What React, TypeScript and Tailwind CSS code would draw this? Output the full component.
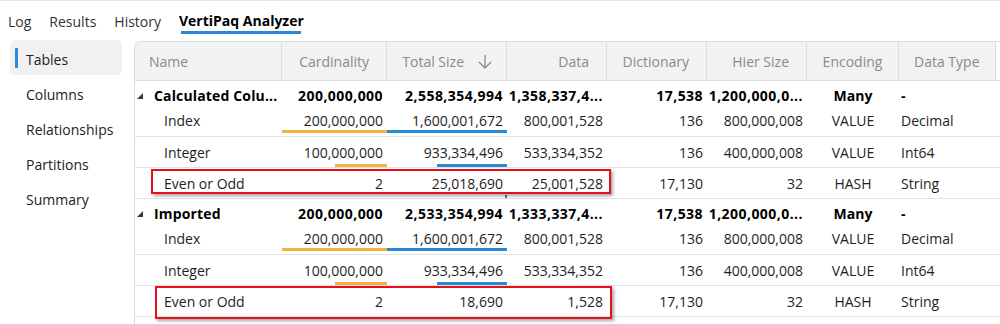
import React from "react";

type Row = {
  name: string;
  card: string;
  total: string;
  data: string;
  dict: string;
  hier: string;
  enc: string;
  type: string;
  cardBar?: number;
  totalBar?: number;
};

type Group = Row & { children: Row[] };

const groups: Group[] = [
  {
    name: "Calculated Colu...",
    card: "200,000,000",
    total: "2,558,354,994",
    data: "1,358,337,4...",
    dict: "17,538",
    hier: "1,200,000,0...",
    enc: "Many",
    type: "-",
    children: [
      { name: "Index", card: "200,000,000", total: "1,600,001,672", data: "800,001,528", dict: "136", hier: "800,000,008", enc: "VALUE", type: "Decimal", cardBar: 105, totalBar: 120 },
      { name: "Integer", card: "100,000,000", total: "933,334,496", data: "533,334,352", dict: "136", hier: "400,000,008", enc: "VALUE", type: "Int64", cardBar: 52, totalBar: 70 },
      { name: "Even or Odd", card: "2", total: "25,018,690", data: "25,001,528", dict: "17,130", hier: "32", enc: "HASH", type: "String", cardBar: 0, totalBar: 2 },
    ],
  },
  {
    name: "Imported",
    card: "200,000,000",
    total: "2,533,354,994",
    data: "1,333,337,4...",
    dict: "17,538",
    hier: "1,200,000,0...",
    enc: "Many",
    type: "-",
    children: [
      { name: "Index", card: "200,000,000", total: "1,600,001,672", data: "800,001,528", dict: "136", hier: "800,000,008", enc: "VALUE", type: "Decimal", cardBar: 105, totalBar: 120 },
      { name: "Integer", card: "100,000,000", total: "933,334,496", data: "533,334,352", dict: "136", hier: "400,000,008", enc: "VALUE", type: "Int64", cardBar: 52, totalBar: 70 },
      { name: "Even or Odd", card: "2", total: "18,690", data: "1,528", dict: "17,130", hier: "32", enc: "HASH", type: "String", cardBar: 0, totalBar: 0 },
    ],
  },
];

const cols = "grid grid-cols-[147px_105px_120px_100px_100px_100px_92px_97px_1fr]";

function Bar({ w, color }: { w?: number; color: string }) {
  if (!w) return null;
  return (
    <div
      className={`absolute right-0 bottom-0 h-[3px] ${color}`}
      style={{ width: w }}
    />
  );
}

function GroupRow({ g }: { g: Group }) {
  return (
    <div className={`${cols} h-[26px] pt-[3px] items-center font-bold text-black`}>
      <div className="flex items-center pl-[2px] whitespace-nowrap overflow-hidden tracking-[0.15px]">
        <svg width="6" height="6" viewBox="0 0 6 6" className="mr-[11px]">
          <polygon points="6,0 6,6 0,6" fill="#3a3a3a" />
        </svg>
        <span>{g.name}</span>
      </div>
      <div className="text-right pr-[4px] whitespace-nowrap tracking-[0.45px]">{g.card}</div>
      <div className="text-right pr-[4px] whitespace-nowrap tracking-[0.45px]">{g.total}</div>
      <div className="text-right pr-[4px] whitespace-nowrap tracking-[0.45px]">{g.data}</div>
      <div className="text-right pr-[4px] whitespace-nowrap tracking-[0.45px]">{g.dict}</div>
      <div className="text-right pr-[4px] whitespace-nowrap tracking-[0.45px]">{g.hier}</div>
      <div className="text-center whitespace-nowrap">{g.enc}</div>
      <div className="pl-[2px] whitespace-nowrap">{g.type}</div>
      <div />
    </div>
  );
}

function ChildRow({ r, first }: { r: Row; first: boolean }) {
  const h = first ? "h-[30px] pb-[3px]" : "h-[31px]";
  return (
    <div className={`${cols} ${h} items-center border-b border-[#e2e2e2] text-[#1e1e1e]`}>
      <div className="pl-[29px] whitespace-nowrap">{r.name}</div>
      <div className="relative h-full flex items-center justify-end pr-[4px] whitespace-nowrap">
        {r.card}
        <Bar w={r.cardBar} color="bg-[#f7b03e]" />
      </div>
      <div className="relative h-full flex items-center justify-end pr-[4px] whitespace-nowrap">
        {r.total}
        <Bar w={r.totalBar} color="bg-[#2a88d8]" />
      </div>
      <div className="text-right pr-[4px] whitespace-nowrap">{r.data}</div>
      <div className="text-right pr-[4px] whitespace-nowrap">{r.dict}</div>
      <div className="text-right pr-[4px] whitespace-nowrap">{r.hier}</div>
      <div className="text-center whitespace-nowrap">{r.enc}</div>
      <div className="pl-[2px] whitespace-nowrap">{r.type}</div>
      <div />
    </div>
  );
}

export default function App() {
  const headerCell = "h-full flex items-center pt-[1px] border-r border-[#dcdcdc] whitespace-nowrap";
  return (
    <div className="w-[1000px] h-[324px] overflow-hidden bg-white border-t border-[#e6e6e6] font-['Open_Sans','Noto_Sans',sans-serif] text-[14px]">
      {/* Tabs */}
      <div className="h-[39px] flex items-start pl-[8px] gap-[18px] text-[#333] text-[14px]">
        <div className="h-[31px] pt-[9px] flex items-center">Log</div>
        <div className="h-[31px] pt-[9px] flex items-center">Results</div>
        <div className="h-[31px] pt-[9px] flex items-center">History</div>
        <div className="flex flex-col items-center">
          <div className="h-[30px] pt-[9px] flex items-center font-bold text-black">VertiPaq Analyzer</div>
          <div className="h-[3px] w-[120px] bg-[#2a88d8]" />
        </div>
      </div>

      <div className="flex">
        {/* Sidebar */}
        <div className="w-[134px] shrink-0 pl-[10px] text-[14px] text-[#222]">
          <div className="h-[35px] w-[112px] rounded-[5px] bg-[#f1f1f1] flex items-center">
            <div className="w-[3px] h-[20px] ml-[5px] bg-[#2a88d8] rounded-[1px]" />
            <span className="ml-[8px] pt-[3px]">Tables</span>
          </div>
          {["Columns", "Relationships", "Partitions", "Summary"].map((s) => (
            <div key={s} className="h-[35px] flex items-center pl-[16px] pt-[3px]">
              {s}
            </div>
          ))}
        </div>

        {/* Table */}
        <div className="relative flex-1 mt-[1px] border-l border-t border-[#dcdcdc] rounded-tl-[6px] h-[300px]">
          <div className={`${cols} h-[39px] bg-[#f2f2f2] border-b border-[#dcdcdc] text-[#8a8a8a] text-[14px] rounded-tl-[6px]`}>
            <div className={`${headerCell} pl-[14px]`}>Name</div>
            <div className={`${headerCell} justify-end pr-[17px]`}>Cardinality</div>
            <div className={`${headerCell} justify-end pr-[14px]`}>
              <span>Total Size</span>
              <svg width="14" height="15" viewBox="0 0 14 15" className="ml-[14px]" fill="none" stroke="#8a8a8a" strokeWidth="1.3">
                <path d="M7 1 V14" />
                <path d="M1 8 L7 14 L13 8" />
              </svg>
            </div>
            <div className={`${headerCell} justify-end pr-[17px]`}>Data</div>
            <div className={`${headerCell} justify-end pr-[17px]`}>Dictionary</div>
            <div className={`${headerCell} justify-end pr-[17px]`}>Hier Size</div>
            <div className={`${headerCell} justify-center`}>Encoding</div>
            <div className={`${headerCell} pl-[15px]`}>Data Type</div>
            <div className="h-full bg-white" />
          </div>

          {groups.map((g) => (
            <div key={g.name}>
              <GroupRow g={g} />
              {g.children.map((c, i) => (
                <ChildRow key={c.name} r={c} first={i === 0} />
              ))}
            </div>
          ))}

          {/* annotation boxes */}
          <div className="absolute left-[16px] top-[127px] w-[460px] h-[25px] border-2 border-[#e8101a] shadow-[2px_2px_3px_rgba(0,0,0,0.35)]" />
          <div className="absolute left-[20px] top-[244px] w-[457px] h-[33px] border-2 border-[#e8101a] shadow-[2px_2px_3px_rgba(0,0,0,0.35)]" />
        </div>
      </div>
    </div>
  );
}
